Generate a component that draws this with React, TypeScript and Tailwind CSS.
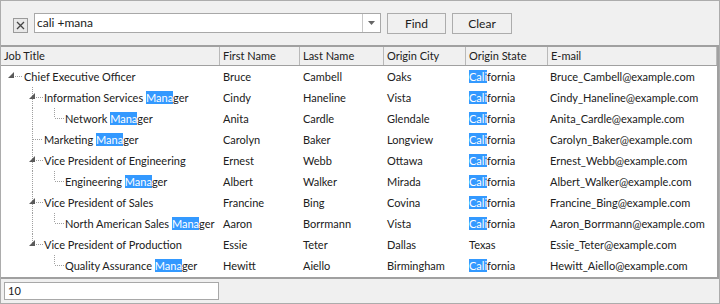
import React from "react";

type Row = {
  title: string;
  level: number;
  kids?: boolean;
  last?: boolean;
  parentLast?: boolean;
  first: string;
  lastName: string;
  city: string;
  state: string;
  email: string;
};

const rows: Row[] = [
  { title: "Chief Executive Officer", level: 0, kids: true, first: "Bruce", lastName: "Cambell", city: "Oaks", state: "California", email: "Bruce_Cambell@example.com" },
  { title: "Information Services Manager", level: 1, kids: true, first: "Cindy", lastName: "Haneline", city: "Vista", state: "California", email: "Cindy_Haneline@example.com" },
  { title: "Network Manager", level: 2, first: "Anita", lastName: "Cardle", city: "Glendale", state: "California", email: "Anita_Cardle@example.com" },
  { title: "Marketing Manager", level: 1, first: "Carolyn", lastName: "Baker", city: "Longview", state: "California", email: "Carolyn_Baker@example.com" },
  { title: "Vice President of Engineering", level: 1, kids: true, first: "Ernest", lastName: "Webb", city: "Ottawa", state: "California", email: "Ernest_Webb@example.com" },
  { title: "Engineering Manager", level: 2, first: "Albert", lastName: "Walker", city: "Mirada", state: "California", email: "Albert_Walker@example.com" },
  { title: "Vice President of Sales", level: 1, kids: true, first: "Francine", lastName: "Bing", city: "Covina", state: "California", email: "Francine_Bing@example.com" },
  { title: "North American Sales Manager", level: 2, first: "Aaron", lastName: "Borrmann", city: "Vista", state: "California", email: "Aaron_Borrmann@example.com" },
  { title: "Vice President of Production", level: 1, kids: true, last: true, first: "Essie", lastName: "Teter", city: "Dallas", state: "Texas", email: "Essie_Teter@example.com" },
  { title: "Quality Assurance Manager", level: 2, parentLast: true, first: "Hewitt", lastName: "Aiello", city: "Birmingham", state: "California", email: "Hewitt_Aiello@example.com" },
];

// highlight the matched prefix of a word
function Hl({ text, word, len }: { text: string; word: string; len: number }) {
  const i = text.indexOf(word);
  if (i < 0) return <>{text}</>;
  return (
    <>
      {text.slice(0, i)}
      <span className="bg-[#3399ff] text-white">{text.slice(i, i + len)}</span>
      {text.slice(i + len)}
    </>
  );
}

const dot = { stroke: "#a0a0a0", strokeWidth: 1, strokeDasharray: "1 1", shapeRendering: "crispEdges" as const };

function Tri({ x }: { x: number }) {
  return <polygon points={`${x + 6},${6} ${x + 6},${12} ${x},${12}`} fill="#5a5a5a" />;
}

function TreeLines({ r }: { r: Row }) {
  const y = 10.5;
  return (
    <svg width="66" height="21" className="absolute left-0 top-0">
      {r.level === 0 && (
        <>
          <Tri x={7} />
          <line x1={14} y1={y} x2={22} y2={y} {...dot} />
        </>
      )}
      {r.level === 1 && (
        <>
          <line x1={31.5} y1={0} x2={31.5} y2={r.last ? 10 : 21} {...dot} />
          {r.kids ? (
            <>
              <Tri x={28} />
              <line x1={35} y1={y} x2={42} y2={y} {...dot} />
            </>
          ) : (
            <line x1={32} y1={y} x2={42} y2={y} {...dot} />
          )}
        </>
      )}
      {r.level === 2 && (
        <>
          {!r.parentLast && <line x1={31.5} y1={0} x2={31.5} y2={21} {...dot} />}
          <line x1={53.5} y1={0} x2={53.5} y2={10} {...dot} />
          <line x1={54} y1={y} x2={63} y2={y} {...dot} />
        </>
      )}
    </svg>
  );
}

const cols = ["w-[219px]", "w-[80px]", "w-[84px]", "w-[82px]", "w-[82px]", "flex-1"];
const heads = ["Job Title", "First Name", "Last Name", "Origin City", "Origin State", "E-mail"];
const pads = ["pl-[23px]", "pl-[43px]", "pl-[64px]"];

export default function App() {
  return (
    <div
      className="w-[720px] h-[304px] bg-[#f0f0f0] border border-[#acacac] flex flex-col text-[11px] text-[#202020] overflow-hidden"
      style={{ fontFamily: "Lato, 'Open Sans', sans-serif" }}
    >
      {/* search bar */}
      <div className="h-[44px] flex items-center pl-[12px] gap-[6px] shrink-0">
        <div className="w-[15px] h-[15px] border border-[#9a9a9a] bg-[#e8e8e8] flex items-center justify-center mt-[4px]">
          <svg width="9" height="9" viewBox="0 0 9 9">
            <path d="M1 1 L8 8 M8 1 L1 8" stroke="#444" strokeWidth="1.3" />
          </svg>
        </div>
        <div className="w-[347px] h-[20px] bg-white border border-[#a8a8a8] flex">
          <div className="flex-1 pl-[2px] leading-[18px] text-[12px]">cali +mana</div>
          <div className="w-[18px] border-l border-[#c8c8c8] flex items-center justify-center">
            <svg width="7" height="4"><polygon points="0,0 7,0 3.5,4" fill="#666" /></svg>
          </div>
        </div>
        <button className="w-[59px] h-[21px] border border-[#acacac] bg-[#f0f0f0] text-[12px] leading-[19px]">Find</button>
        <button className="w-[60px] h-[21px] border border-[#acacac] bg-[#f0f0f0] text-[12px] leading-[19px]">Clear</button>
      </div>

      {/* grid */}
      <div className="flex-none h-[234px] bg-white border-y-2 border-r-2 border-[#a0a0a0] flex flex-col">
        <div className="h-[19px] bg-[#f0f0f0] border-b border-[#a0a0a0] flex leading-[18px]">
          {heads.map((h, i) => (
            <div key={h} className={`${cols[i]} shrink-0 overflow-hidden border-r border-[#b9b9b9] pl-[3px] whitespace-nowrap`}>
              {h}
            </div>
          ))}
        </div>
        {rows.map((r, idx) => (
          <div key={idx} className="h-[21px] flex leading-[21px] whitespace-nowrap">
            <div className={`${cols[0]} shrink-0 overflow-hidden relative ${pads[r.level]}`}>
              <TreeLines r={r} />
              <Hl text={r.title} word="Manager" len={4} />
            </div>
            <div className={`${cols[1]} shrink-0 overflow-hidden pl-[3px]`}>{r.first}</div>
            <div className={`${cols[2]} shrink-0 overflow-hidden pl-[3px]`}>{r.lastName}</div>
            <div className={`${cols[3]} shrink-0 overflow-hidden pl-[3px]`}>{r.city}</div>
            <div className={`${cols[4]} shrink-0 overflow-hidden pl-[3px]`}>
              <Hl text={r.state} word="California" len={4} />
            </div>
            <div className={`${cols[5]} overflow-hidden pl-[2px]`}>{r.email}</div>
          </div>
        ))}
      </div>

      {/* footer */}
      <div className="flex-1 flex items-center pl-[3px]">
        <div className="w-[215px] h-[18px] bg-white border border-[#a8a8a8] pl-[3px] leading-[16px]">10</div>
      </div>
    </div>
  );
}
